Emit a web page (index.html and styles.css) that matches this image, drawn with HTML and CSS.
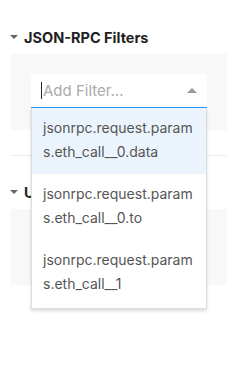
FILE: index.html
```
<!DOCTYPE html>
<html lang="en">

<head>
    <meta charset="UTF-8">
    <meta name="viewport" content="width=device-width, initial-scale=1.0">
    <title>Filters</title>
    <link rel="stylesheet" href="styles.css">
</head>

<body>
    <div class="section">
        <h3 class="section-title"><span class="arrow"></span>JSON-RPC Filters</h3>
        <div class="panel">
            <div class="select">
                <div class="select-input">
                    <span class="cursor"></span>
                    <span class="placeholder">Add Filter...</span>
                    <span class="select-arrow"></span>
                </div>
                <ul class="menu">
                    <li class="option active">jsonrpc.request.params.eth_call__0.data</li>
                    <li class="option">jsonrpc.request.params.eth_call__0.to</li>
                    <li class="option">jsonrpc.request.params.eth_call__1</li>
                </ul>
            </div>
        </div>
    </div>

    <div class="section">
        <h3 class="section-title"><span class="arrow"></span>URL Filters</h3>
        <div class="panel"></div>
    </div>
</body>

</html>
```

FILE: styles.css
```
* {
    box-sizing: border-box;
    margin: 0;
    padding: 0;
}

html,
body {
    min-height: 100vh;
}

body {
    font-family: Inter, "Noto Sans", sans-serif;
    color: #222;
    background: #fff;
    padding-top: 25px;
}

.section + .section {
    border-top: 1px solid #ececec;
    margin: 25px 15px 0 11px;
    padding-top: 24px;
}

.section + .section .section-title,
.section + .section .panel {
    margin-left: 0;
    margin-right: 0;
}

.section-title {
    display: flex;
    align-items: center;
    height: 24px;
    font-size: 14.5px;
    font-weight: 700;
    color: #222;
    margin-left: 10px;
}

.arrow {
    width: 0;
    height: 0;
    border-left: 4px solid transparent;
    border-right: 4px solid transparent;
    border-top: 4px solid #666;
    margin-right: 6px;
}

.section + .section .arrow {
    margin-left: -1px;
}

.panel {
    background: #f8f8f8;
    height: 76px;
    margin: 5px 15px 0 11px;
    padding: 20px;
}

.select {
    position: relative;
}

.select-input {
    display: flex;
    align-items: center;
    height: 34px;
    background: #fff;
    border-bottom: 1px solid #2196f3;
    padding: 0 10px;
}

.cursor {
    width: 1px;
    height: 17px;
    background: #222;
    margin-right: 1px;
}

.placeholder {
    flex: 1;
    font-size: 15px;
    color: #aaa;
}

.select-arrow {
    width: 0;
    height: 0;
    border-left: 5px solid transparent;
    border-right: 5px solid transparent;
    border-bottom: 5px solid #999;
}

.menu {
    position: absolute;
    top: 100%;
    left: 0;
    right: 0;
    z-index: 2;
    list-style: none;
    background: #fff;
    border: 1px solid #ddd;
    border-top: none;
    box-shadow: 0 2px 3px rgba(0, 0, 0, 0.15);
    padding-bottom: 2px;
}

.option {
    font-size: 14px;
    line-height: 24px;
    color: #555;
    padding: 8px 11px 10px;
    word-break: break-all;
}

.option.active {
    background: #ebf4fd;
}
```
